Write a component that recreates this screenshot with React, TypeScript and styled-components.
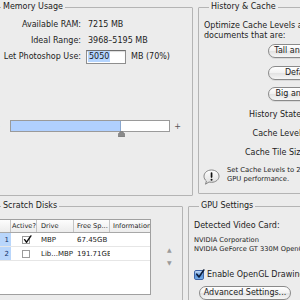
import React from 'react';
import styled, { createGlobalStyle } from 'styled-components';

const Global = createGlobalStyle`
  html, body { margin: 0; padding: 0; background: #ececec; overflow: hidden; }
  body {
    width: 300px; height: 300px;
    font-family: "DejaVu Sans", "Noto Sans", sans-serif;
    color: #1c1c1c;
  }
`;

const Page = styled.div`
  width: 440px;
  margin-left: -10px;
  padding-top: 2px;
  display: flex;
  flex-direction: column;
  gap: 5px;
`;

const Row = styled.div`
  display: flex;
  gap: 5px;
  align-items: flex-start;
`;

const Group = styled.fieldset<{ $w: number; $h: number }>`
  box-sizing: border-box;
  margin: 0;
  min-width: 0;
  width: ${p => p.$w}px;
  height: ${p => p.$h}px;
  border: 1px solid #b4b4b4;
  border-radius: 1px;
  padding: 0;
  flex: none;
  display: block;
`;

const Legend = styled.legend`
  font-size: 8px;
  line-height: 10px;
  padding: 0 2px;
  margin-left: 10px;
  color: #1a1a1a;
`;

/* ---------- Memory ---------- */
const MemGrid = styled.div`
  display: grid;
  grid-template-columns: 90px auto;
  grid-template-rows: 14px 14px 15px;
  column-gap: 5px;
  row-gap: 2px;
  margin-top: 5px;
  font-size: 8px;
  align-items: center;
`;

const Label = styled.div`
  text-align: right;
  white-space: nowrap;
`;

const Value = styled.div`
  display: flex;
  align-items: center;
  gap: 5px;
  padding-left: 2px;
  white-space: nowrap;
`;

const Input = styled.div`
  box-sizing: border-box;
  width: 40px;
  height: 14px;
  margin-left: -2px;
  background: #fff;
  border: 1px solid #8e8e8e;
  border-top-color: #6f6f6f;
  box-shadow: inset 0 1px 1px rgba(0,0,0,0.15);
  display: flex;
  align-items: center;
  padding-left: 1px;
`;

const Selected = styled.span`
  background: #b5d5ff;
  padding: 0 1px;
  line-height: 11px;
`;

const SliderRow = styled.div`
  display: flex;
  align-items: center;
  margin-top: 56px;
  font-size: 8px;
  color: #555;
`;

const SliderSign = styled.span<{ $w: number }>`
  width: ${p => p.$w}px;
  text-align: right;
  flex: none;
`;

const Track = styled.div`
  position: relative;
  box-sizing: border-box;
  width: 160px;
  height: 12px;
  margin: 0 3px 0 10px;
  background: #fff;
  border: 1px solid #9a9a9a;
`;

const Fill = styled.div`
  height: 100%;
  background: #b0d0ff;
  border-right: 1px solid #8aa8d0;
  box-sizing: border-box;
`;

const Thumb = styled.svg`
  position: absolute;
  top: 10px;
  width: 7px;
  height: 6px;
`;

/* ---------- History ---------- */
const HistBody = styled.div`
  padding-left: 5px;
  font-size: 8px;
  line-height: 10px;
`;

const Para = styled.div`
  margin-top: 9px;
  white-space: nowrap;
`;

const Buttons = styled.div`
  display: flex;
  flex-direction: column;
  gap: 7.5px;
  margin-top: 3px;
  padding-left: 64px;
`;

const Pill = styled.div<{ $w: number }>`
  box-sizing: border-box;
  width: ${p => p.$w}px;
  height: 14px;
  border: 1px solid #8a8a8a;
  border-radius: 7px;
  background: linear-gradient(#ffffff, #f1f1f1 50%, #e2e2e2 51%, #f6f6f6);
  font-size: 8px;
  line-height: 12px;
  text-align: center;
  white-space: nowrap;
  overflow: hidden;
  box-shadow: 0 1px 0 rgba(0,0,0,0.08);
`;

const Fields = styled.div`
  display: flex;
  flex-direction: column;
  gap: 9px;
  margin-top: 9px;
  width: 104px;
  align-items: flex-end;
`;

const FieldLabel = styled.div`
  white-space: nowrap;
  line-height: 10px;
`;

const Warn = styled.div`
  display: flex;
  gap: 7px;
  margin-top: 10px;
  align-items: flex-start;
`;

const WarnIcon = styled.svg`
  margin-left: -1px;
  margin-top: 1px;
  flex: none;
`;

const WarnText = styled.div`
  font-size: 6.8px;
  line-height: 9px;
  white-space: nowrap;
  margin-top: -2px;
`;

/* ---------- Scratch ---------- */
const TableWrap = styled.div`
  display: flex;
  align-items: flex-start;
  margin-top: 8px;
`;

const Table = styled.div`
  box-sizing: border-box;
  width: 153px;
  height: 76px;
  margin-left: 7px;
  background: #fff;
  border: 1px solid #a0a0a0;
  flex: none;
  overflow: hidden;
`;

const TRow = styled.div<{ $head?: boolean }>`
  display: grid;
  grid-template-columns: 12px 26px 37px 36px 60px;
  height: ${p => (p.$head ? 12 : 13)}px;
  align-items: stretch;
  border-bottom: 1px solid ${p => (p.$head ? '#a8a8a8' : '#e6e6e6')};
  background: ${p => (p.$head ? 'linear-gradient(#fdfdfd, #ececec)' : '#fff')};
`;

const Cell = styled.div<{ $num?: boolean; $head?: boolean; $center?: boolean; $pad?: number }>`
  display: flex;
  align-items: center;
  justify-content: ${p => (p.$num ? 'flex-end' : p.$center ? 'center' : 'flex-start')};
  padding: 0 ${p => (p.$num ? 2 : 0)}px 0 ${p => (p.$num ? 0 : p.$pad ?? 3)}px;
  border-right: ${p => (p.$head ? '1px solid #c4c4c4' : 'none')};
  background: ${p => (p.$num && !p.$head ? '#b9d6fb' : 'transparent')};
  color: ${p => (p.$num ? '#10306a' : '#1a1a1a')};
  font-size: ${p => (p.$head ? 6.6 : 7)}px;
  white-space: nowrap;
  overflow: hidden;
`;

const Check = styled.div<{ $on?: boolean }>`
  box-sizing: border-box;
  width: 8px;
  height: 8px;
  border: 1px solid #9b9b9b;
  background: #fff;
  position: relative;
`;

const Arrows = styled.div`
  display: flex;
  flex-direction: column;
  gap: 4px;
  margin: 26px 0 0 16px;
  font-size: 6px;
  color: #9a9a9a;
  line-height: 9px;
`;

/* ---------- GPU ---------- */
const GpuBody = styled.div`
  padding-left: 5px;
  font-size: 8px;
  line-height: 10px;
`;

const Heading = styled.div`
  margin-top: 10px;
  white-space: nowrap;
`;

const CardInfo = styled.div`
  margin-top: 5px;
`;

const Small = styled.div`
  font-size: 6.7px;
  line-height: 9px;
  white-space: nowrap;
`;

const CheckRow = styled.div`
  display: flex;
  align-items: center;
  gap: 3px;
  margin-top: 16px;
  white-space: nowrap;
`;

const AquaCheck = styled.div`
  box-sizing: border-box;
  width: 10px;
  height: 10px;
  border: 1px solid #3f64a6;
  border-radius: 2px;
  background: linear-gradient(#c9def7, #5c95dc 55%, #78aee8);
  position: relative;
  flex: none;
`;

const CheckMark = styled.svg`
  position: absolute;
  left: 0;
  top: -2px;
`;

const WideButton = styled(Pill)`
  margin: 6px 0 0 5px;
`;

function Tick({ size = 9, color = '#111' }: { size?: number; color?: string }) {
  return (
    <CheckMark width={size} height={size} viewBox="0 0 10 10">
      <path d="M1.8 5.2 L4 8 L8.8 1" fill="none" stroke={color} strokeWidth="1.6" strokeLinecap="round" strokeLinejoin="round" />
    </CheckMark>
  );
}

export default function App() {
  return (
    <>
      <Global />
      <Page>
        <Row>
          <Group $w={203} $h={194}>
            <Legend>Memory Usage</Legend>
            <MemGrid>
              <Label>Available RAM:</Label>
              <Value>7215 MB</Value>
              <Label>Ideal Range:</Label>
              <Value>3968–5195 MB</Value>
              <Label>Let Photoshop Use:</Label>
              <Value>
                <Input><Selected>5050</Selected></Input>
                <span>MB (70%)</span>
              </Value>
            </MemGrid>
            <SliderRow>
              <SliderSign $w={9}>-</SliderSign>
              <Track>
                <Fill style={{ width: `${(111 / 160) * 100}%` }} />
                <Thumb viewBox="0 0 7 6" style={{ left: '107px' }}>
                  <path d="M3.5 0 L6.5 2.5 L6.5 6 L0.5 6 L0.5 2.5 Z" fill="#8a8a8a" stroke="#6b6b6b" strokeWidth="0.6" />
                </Thumb>
              </Track>
              <SliderSign $w={8}>+</SliderSign>
            </SliderRow>
          </Group>
          <Group $w={200} $h={192}>
            <Legend>History &amp; Cache</Legend>
            <HistBody>
              <Para>
                Optimize Cache Levels and Tile Size for<br />documents that are:
              </Para>
              <Buttons>
                <Pill $w={63}>Tall and Thin</Pill>
                <Pill $w={63}>Default</Pill>
                <Pill $w={63}>Big and Flat</Pill>
              </Buttons>
              <Fields>
                <FieldLabel>History States:</FieldLabel>
                <FieldLabel>Cache Levels:</FieldLabel>
                <FieldLabel>Cache Tile Size:</FieldLabel>
              </Fields>
              <Warn>
                <WarnIcon width="17" height="16" viewBox="0 0 17 16">
                  <defs>
                    <linearGradient id="wg" x1="0" y1="0" x2="0" y2="1">
                      <stop offset="0" stopColor="#ffffff" />
                      <stop offset="1" stopColor="#dcdcdc" />
                    </linearGradient>
                  </defs>
                  <path d="M8.5 1 C12.8 1 16 3.8 16 7.2 C16 10.6 12.8 13.3 8.5 13.3 C7.6 13.3 6.8 13.2 6 13 L2.5 15.2 L3.4 12 C1.9 10.9 1 9.1 1 7.2 C1 3.8 4.2 1 8.5 1 Z" fill="url(#wg)" stroke="#7a7a7a" strokeWidth="0.9" />
                  <rect x="7.7" y="3.3" width="1.7" height="5.6" rx="0.8" fill="#111" />
                  <circle cx="8.55" cy="10.7" r="1" fill="#111" />
                </WarnIcon>
                <WarnText>
                  Set Cache Levels to 2 or more for optimum<br />GPU performance.
                </WarnText>
              </Warn>
            </HistBody>
          </Group>
        </Row>
        <Row>
          <Group $w={193} $h={120}>
            <Legend>Scratch Disks</Legend>
            <TableWrap>
              <Table>
                <TRow $head>
                  <Cell $head $num />
                  <Cell $head $pad={1}>Active?</Cell>
                  <Cell $head $pad={4}>Drive</Cell>
                  <Cell $head>Free Sp...</Cell>
                  <Cell $head>Information</Cell>
                </TRow>
                <TRow>
                  <Cell $num>1</Cell>
                  <Cell $center><Check $on><Tick size={9} /></Check></Cell>
                  <Cell $pad={4}>MBP</Cell>
                  <Cell>67.45GB</Cell>
                  <Cell />
                </TRow>
                <TRow>
                  <Cell $num>2</Cell>
                  <Cell $center><Check /></Cell>
                  <Cell $pad={4}>Lib...MBP</Cell>
                  <Cell>191.71GB</Cell>
                  <Cell />
                </TRow>
              </Table>
              <Arrows>
                <span>▲</span>
                <span>▼</span>
              </Arrows>
            </TableWrap>
          </Group>
          <Group $w={200} $h={120}>
            <Legend>GPU Settings</Legend>
            <GpuBody>
              <Heading>Detected Video Card:</Heading>
              <CardInfo>
                <Small>NVIDIA Corporation</Small>
                <Small>NVIDIA GeForce GT 330M OpenGL Engine</Small>
              </CardInfo>
              <CheckRow>
                <AquaCheck><Tick size={10} color="#0d1d3a" /></AquaCheck>
                <span>Enable OpenGL Drawing</span>
              </CheckRow>
              <WideButton $w={92}>Advanced Settings...</WideButton>
            </GpuBody>
          </Group>
        </Row>
      </Page>
    </>
  );
}
